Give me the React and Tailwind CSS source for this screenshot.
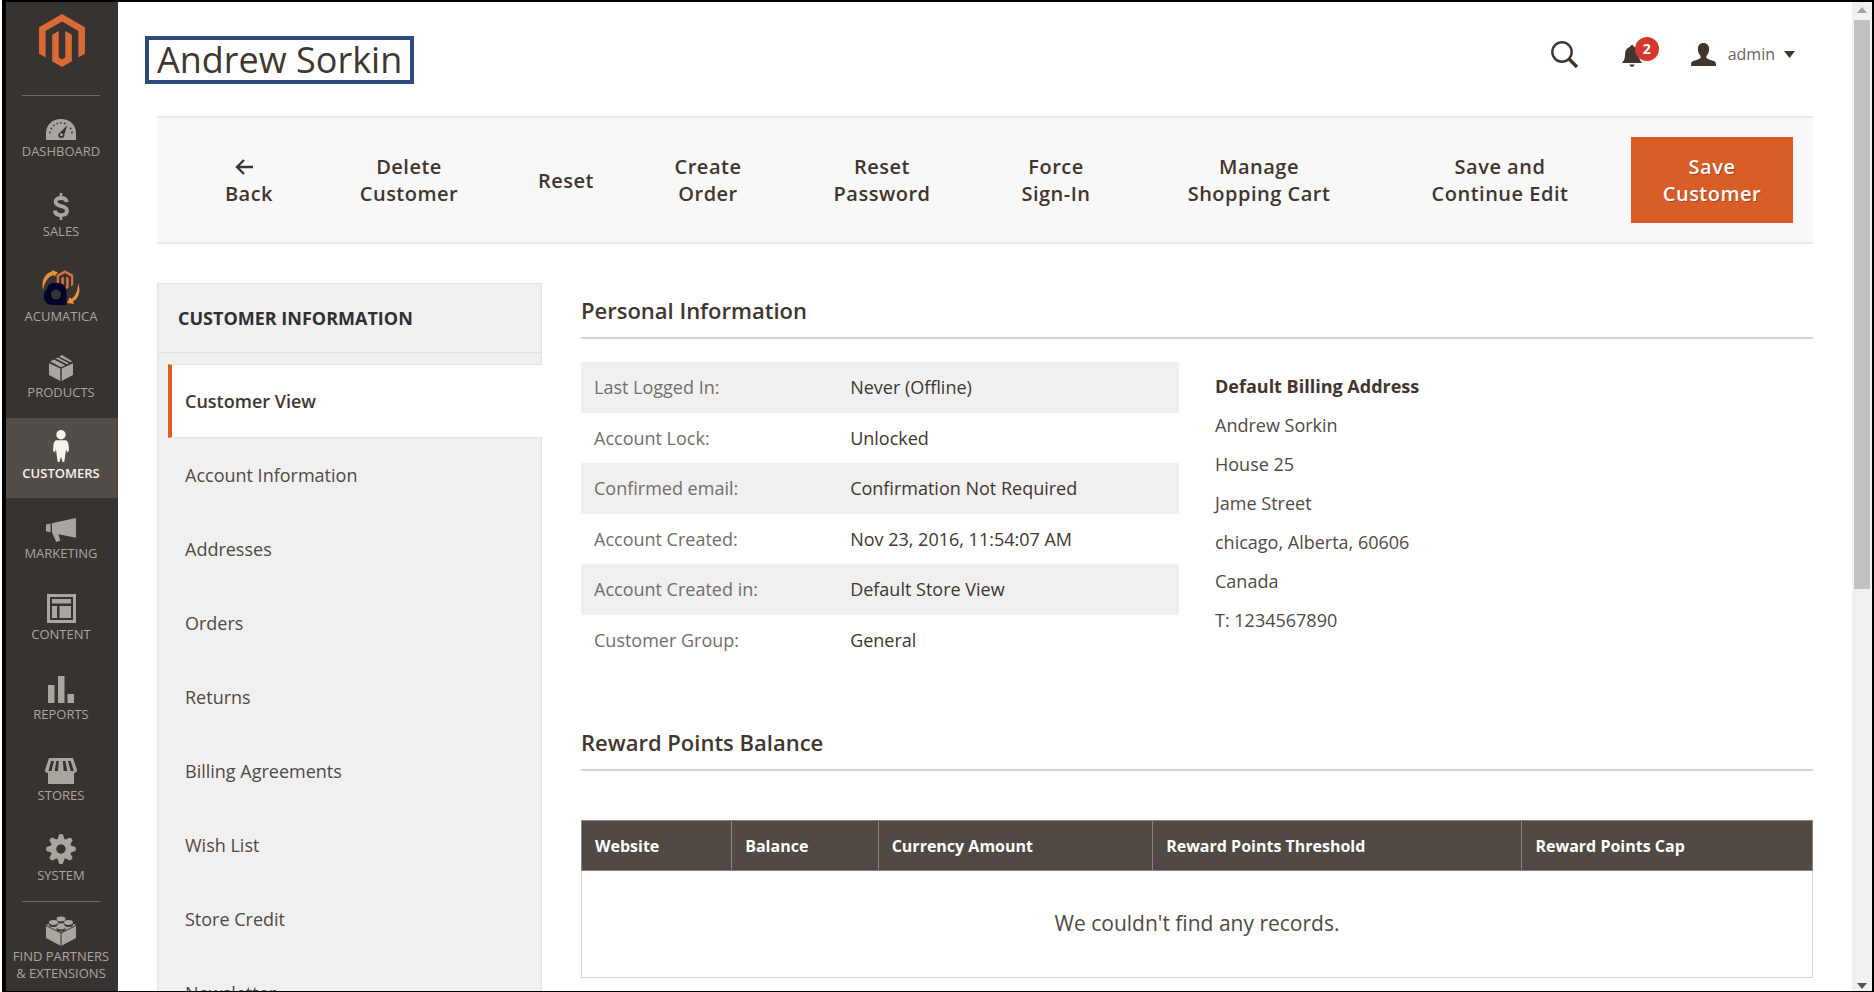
import React from "react";

const MAGENTO_PATH =
  "M12 24l-4.455-2.572v-12l2.97-1.715v12.001l1.485.902 1.485-.902V7.713l2.971 1.715v12L12 24zM22.391 6v12l-2.969 1.714V7.713L12 3.43 4.574 7.713v12.001L1.609 18V6L12 0l10.391 6z";

function Logo() {
  return (
    <svg viewBox="1.6 0 20.8 24" className="h-[53px] w-[46px] fill-[#d96a35]" aria-hidden="true">
      <path d={MAGENTO_PATH} />
    </svg>
  );
}

function DashboardIcon() {
  return (
    <svg viewBox="0 0 30 21" className="h-[21px] w-[30px]" fill="currentColor" aria-hidden="true">
      <path d="M0 21V14C0 6 6.500 0 15 0s15 6 15 14v7z" />
      <g fill="#373330">
        <circle cx="4" cy="13.500" r=".9" />
        <circle cx="5.400" cy="9.500" r=".9" />
        <circle cx="7.900" cy="6.300" r=".9" />
        <circle cx="11.300" cy="4.400" r=".9" />
        <circle cx="15" cy="3.800" r=".9" />
        <circle cx="18.700" cy="4.400" r=".9" />
        <circle cx="24.600" cy="9.500" r=".9" />
        <circle cx="26" cy="13.500" r=".9" />
        <path d="M21.400 6.200 18.300 15.600a3 3 0 1 1-4.300-2.200zM15.400 14.300a1.500 1.500 0 1 0 .1 0z" fillRule="evenodd" />
      </g>
    </svg>
  );
}

function SalesIcon() {
  return (
    <svg viewBox="0 0 16 27" className="h-[27px] w-4" fill="none" stroke="currentColor" aria-hidden="true">
      <path d="M8 0v5M8 22v5" strokeWidth="2.600" />
      <path d="M13.800 9C13.400 6.200 11.500 5 8 5 4.600 5 2.600 6.400 2.600 8.800c0 6 11.400 2.600 11.400 9 0 2.700-2.300 4.300-6 4.300-3.900 0-5.900-1.700-6.100-4.600" strokeWidth="3.800" />
    </svg>
  );
}

function AcumaticaIcon() {
  return (
    <svg viewBox="0 0 38 35" className="h-[35px] w-[38px]" aria-hidden="true">
      <path d="M1 20C-1 11 3 3 10 1.500L10 0l6 2.500L12 7V5C6 6.500 2.500 12 1 20z" fill="#e8913a" />
      <path d="M36 13c3.500 9 0 16-5 18.500l1 2.500-7-1 3-6 1.500 2C34 25.500 36 20 36 13z" fill="#e8913a" />
      <svg x="14.500" y="0" width="17" height="20" viewBox="1.6 0 20.8 24">
        <path d={MAGENTO_PATH} fill="#d97042" />
      </svg>
      <path fillRule="evenodd" fill="#03022d" d="M12 13h4c5 0 8.500 3.500 8.500 8.500V35H11C5.500 35 2 31.500 2 27v-2c0-3 1.500-4.500 3-5.500C5.500 15.500 8 13 12 13zM14 19.500a5 5 0 1 0 .1 0z" />
    </svg>
  );
}

function ProductsIcon() {
  return (
    <svg viewBox="0 0 24 26" className="h-[26px] w-6" fill="currentColor" aria-hidden="true">
      <path d="M0 8.200 11.300 13.600V26L0 20zM24 8.200 12.700 13.600V26L24 20zM1.200 6.600 5 4.500l11.200 5.700-4.200 2zM6.800 3.600 8.800 2.500 20 8.300l-2 1zM10.300 1.800 13 0l10 6.300-1.400 1z" />
    </svg>
  );
}

function CustomersIcon() {
  return (
    <svg viewBox="0 0 16 32" className="h-8 w-4" fill="currentColor" aria-hidden="true">
      <circle cx="8" cy="4.700" r="4.700" />
      <path d="M4 10.300h8c2.200 0 3.200 1.700 3.500 4l.5 6.500-2 1.700-.9-3.500L11.300 32H9.500L8 26.500 6.500 32H4.700L2.900 19 2 22.500l-2-1.700.5-6.500c.3-2.300 1.300-4 3.500-4z" />
    </svg>
  );
}

function MarketingIcon() {
  return (
    <svg viewBox="0 0 30 24" className="h-6 w-[30px]" fill="currentColor" aria-hidden="true">
      <path d="M0 6.500 4.500 5.500v8.700L0 13.300zM5.800 5.200 30 0v19.800l-17.500-3.600 1.700 6.300L10.300 24 6 14.500z" />
    </svg>
  );
}

function ContentIcon() {
  return (
    <svg viewBox="0 0 29 29" className="h-[29px] w-[29px]" fill="currentColor" aria-hidden="true">
      <path fillRule="evenodd" d="M0 0h29v29H0zM3 3v23h23V3z" />
      <path d="M5 5h19v4.500H5zM5 12h5v12H5zM12.500 12H24v12H12.500z" />
    </svg>
  );
}

function ReportsIcon() {
  return (
    <svg viewBox="0 0 26 27" className="h-[27px] w-[26px]" fill="currentColor" aria-hidden="true">
      <path d="M0 9h6.500v18H0zM10 0h6.500v27H10zM19.500 18H26v9h-6.500z" />
    </svg>
  );
}

function StoresIcon() {
  return (
    <svg viewBox="0 0 32 26" className="h-[26px] w-8" aria-hidden="true">
      <path fill="currentColor" d="M4 0h24l4 12c0 2-1.200 3-3 3v11H3V15c-1.800 0-3-1-3-3z" />
      <path fill="#373330" d="M6 3h3L6.500 13H3.500zM11.300 3h2.500L13 13H9.600zM17.800 3h2.500l2 10H18.700zM23 3h2.700l3.200 10h-3.200z" />
    </svg>
  );
}

function SystemIcon() {
  const teeth = [0, 45, 90, 135, 180, 225, 270, 315];
  return (
    <svg viewBox="0 0 30 30" className="h-[30px] w-[30px]" fill="currentColor" aria-hidden="true">
      {teeth.map((angle) => (
        <path key={angle} d="M11.300 6 13 .6Q15-.4 17 .6L18.700 6z" transform={`rotate(${angle} 15 15)`} />
      ))}
      <path fillRule="evenodd" d="M15 4.500a10.500 10.500 0 1 0 .1 0zM15 10.300a4.700 4.700 0 1 1-.1 0z" />
    </svg>
  );
}

function PartnersIcon() {
  return (
    <svg viewBox="0 0 30 30" className="h-[30px] w-[30px]" aria-hidden="true">
      <path fill="currentColor" d="M0 9 15 3l15 6v13l-15 8-15-8z" />
      <path d="M0 9.500 15 17l15-7.500M15 17v13" stroke="#373330" strokeWidth="1" fill="none" />
      {[[15, 3.5], [7.5, 7], [22.5, 7], [15, 11.5]].map(([x, y]) => (
        <g key={`${x}-${y}`}>
          <ellipse cx={x} cy={y + 1.5} rx="4.600" ry="2.500" fill="#373330" />
          <ellipse cx={x} cy={y - 0.5} rx="4.400" ry="2.400" fill="currentColor" />
        </g>
      ))}
    </svg>
  );
}

const NAV = [
  { label: "DASHBOARD", Icon: DashboardIcon },
  { label: "SALES", Icon: SalesIcon },
  { label: "ACUMATICA", Icon: AcumaticaIcon, tall: true },
  { label: "PRODUCTS", Icon: ProductsIcon },
  { label: "CUSTOMERS", Icon: CustomersIcon, active: true },
  { label: "MARKETING", Icon: MarketingIcon },
  { label: "CONTENT", Icon: ContentIcon },
  { label: "REPORTS", Icon: ReportsIcon },
  { label: "STORES", Icon: StoresIcon },
  { label: "SYSTEM", Icon: SystemIcon },
];

function Sidebar() {
  return (
    <nav aria-label="Main" className="flex w-28 shrink-0 flex-col overflow-hidden bg-[#373330] text-[13px] leading-[17px] text-[#aaa69f]">
      <a href="#home" aria-label="Magento" className="flex h-[93px] shrink-0 justify-center pt-3">
        <Logo />
      </a>
      <div className="ml-4 mr-[18px] h-px shrink-0 bg-[#736963]" />
      <ul>
        {NAV.map(({ label, Icon, active, tall }) => (
          <li key={label} className={`h-20 even:h-[81px] ${active ? "bg-[#524d49] text-[#f7f3eb]" : ""}`}>
            <a href={`#${label.toLowerCase()}`} className="flex h-full flex-col items-center pr-[2px]">
              <span className={`flex items-end justify-center ${tall ? "h-12" : "h-11"}`}>
                <Icon />
              </span>
              <span className={`mt-[3px] ${active ? "font-semibold" : ""}`}>{label}</span>
            </a>
          </li>
        ))}
      </ul>
      <div className="ml-4 mr-[18px] h-px shrink-0 bg-[#736963]" />
      <a href="#partners" className="flex flex-col items-center pr-[2px] pt-[14px] text-center">
        <PartnersIcon />
        <span className="mt-[2px] whitespace-nowrap">
          FIND PARTNERS
          <br />
          &amp; EXTENSIONS
        </span>
      </a>
    </nav>
  );
}

function PageHeader() {
  return (
    <header className="flex h-[114px] items-start justify-between pr-[18px]">
      <h1 className="-ml-3 mt-[34px] flex h-12 items-center border-4 border-[#2a4a7c] px-2 text-[36px] leading-10 text-[#41362f]">
        Andrew Sorkin
      </h1>
      <div className="mt-9 flex h-8 items-center text-[#41362f]">
        <button type="button" aria-label="Search">
          <svg viewBox="0 0 27 27" className="h-[27px] w-[27px]" fill="none" stroke="currentColor" aria-hidden="true">
            <circle cx="11" cy="11" r="9.700" strokeWidth="2.400" />
            <path d="M17.800 17.800 26 26" strokeWidth="3.400" />
          </svg>
        </button>
        <button type="button" aria-label="Notifications" className="relative ml-11 mt-1 flex w-6">
          <svg viewBox="0 0 20 22" className="h-[22px] w-5" fill="currentColor" aria-hidden="true">
            <path d="M10 0c1.200 0 1.800.8 1.800 1.800 3.200.8 5 3.400 5.100 6.800.1 5 .8 6.500 3.100 9.400H0c2.300-2.900 3-4.400 3.100-9.400.1-3.400 1.900-6 5.100-6.800C8.200.8 8.800 0 10 0zM7.500 19.500h5c-.4 1.600-1.200 2.300-2.500 2.300s-2.100-.7-2.500-2.300z" />
          </svg>
          <span className="absolute -top-2 left-[13px] flex h-6 w-6 items-center justify-center rounded-full bg-[#d3382f] text-sm font-bold text-white">
            2
          </span>
        </button>
        <button type="button" className="ml-[45px] flex items-center text-[16px] text-[#6b645e]">
          <svg viewBox="0 0 25 23" className="h-[23px] w-[25px] text-[#41362f]" fill="currentColor" aria-hidden="true">
            <path d="M12.500 0c3.600 0 5.600 2.300 5.600 5.800 0 3-1 5.600-2.700 7.200v2c1.600 1.700 6.200 2.200 8.400 3.600 1 .7 1.200 2 1.200 4.400H0c0-2.400.2-3.700 1.200-4.400 2.200-1.400 6.800-1.900 8.400-3.600v-2C7.900 11.400 6.900 8.800 6.900 5.800 6.900 2.300 8.900 0 12.500 0z" />
          </svg>
          <span className="ml-3">admin</span>
          <svg viewBox="0 0 11 7" className="ml-[9px] h-[7px] w-[11px] text-[#41362f]" fill="currentColor" aria-hidden="true">
            <path d="M0 0h11L5.500 7z" />
          </svg>
        </button>
      </div>
    </header>
  );
}

const ACTIONS = [
  ["Delete", "Customer"],
  ["Reset"],
  ["Create", "Order"],
  ["Reset", "Password"],
  ["Force", "Sign-In"],
  ["Manage", "Shopping Cart"],
  ["Save and", "Continue Edit"],
];

function ActionBar() {
  return (
    <div className="grid h-32 grid-cols-[128fr_192fr_122fr_162fr_186fr_162fr_244fr_238fr_auto] items-center border-y-2 border-[#ebebeb] bg-[#f8f8f8] pl-7 pr-5 text-xl font-semibold leading-[27px] tracking-wide text-[#41362f]">
      <button type="button" className="flex flex-col items-center">
        <span className="flex h-[27px] items-center pr-[10px]">
          <svg viewBox="0 0 18 16" className="h-4 w-[18px]" fill="none" stroke="currentColor" strokeWidth="2.400" aria-hidden="true">
            <path d="M9 1 2 8l7 7M2 8h16" />
          </svg>
        </span>
        Back
      </button>
      {ACTIONS.map((lines) => (
        <button key={lines.join(" ")} type="button" className="whitespace-nowrap text-center">
          {lines.map((line) => (
            <span key={line} className="block">{line}</span>
          ))}
        </button>
      ))}
      <button type="button" className="ml-3 h-[86px] w-[162px] bg-[#d95d27] text-white text-shadow-[1px_1px_0_rgba(0,0,0,0.25)]">
        Save
        <br />
        Customer
      </button>
    </div>
  );
}

const TABS = ["Customer View", "Account Information", "Addresses", "Orders", "Returns", "Billing Agreements", "Wish List", "Store Credit", "Newsletter"];

function CustomerTabs() {
  return (
    <aside className="w-[385px] shrink-0 border border-[#e3e3e3] bg-[#f0f0f0]">
      <h2 className="flex h-[69px] items-center border-b border-[#e3e3e3] pl-5 text-[18px] font-bold text-[#303030]">
        CUSTOMER INFORMATION
      </h2>
      <ul className="pt-[11px] text-[18px] text-[#514943]">
        {TABS.map((tab, i) => (
          <li key={tab} className="h-[74px] pl-[10px]">
            <a
              href={`#${tab.toLowerCase().replace(/ /g, "-")}`}
              className={`flex h-full items-center ${
                i === 0 ? "-mr-px border-y border-l-4 border-y-[#e3e3e3] border-l-[#e05e23] bg-white pl-[13px] font-semibold text-[#41362f]" : "pl-[17px]"
              }`}
            >
              {tab}
            </a>
          </li>
        ))}
      </ul>
    </aside>
  );
}

const INFO = [
  ["Last Logged In:", "Never (Offline)"],
  ["Account Lock:", "Unlocked"],
  ["Confirmed email:", "Confirmation Not Required"],
  ["Account Created:", "Nov 23, 2016, 11:54:07 AM"],
  ["Account Created in:", "Default Store View"],
  ["Customer Group:", "General"],
];

const ADDRESS = ["Andrew Sorkin", "House 25", "Jame Street", "chicago, Alberta, 60606", "Canada", "T: 1234567890"];

function SectionTitle({ children }) {
  return (
    <h2 className="flex h-14 items-center border-b-2 border-[#d9d5c9] text-[22px] font-semibold text-[#41362f]">{children}</h2>
  );
}

const COLUMNS = [
  { label: "Website", width: "w-[12.2%]" },
  { label: "Balance", width: "w-[11.9%]" },
  { label: "Currency Amount", width: "w-[22.3%]" },
  { label: "Reward Points Threshold", width: "w-[30%]" },
  { label: "Reward Points Cap", width: "" },
];

function CustomerDetails() {
  return (
    <div className="min-w-0 flex-1">
      <section>
        <SectionTitle>Personal Information</SectionTitle>
        <div className="mt-[23px] grid grid-cols-2 gap-x-9 text-[18px]">
          <table className="w-full self-start text-left">
            <tbody>
              {INFO.map(([label, value]) => (
                <tr key={label} className="h-[51px] odd:bg-[#f0f0f0] even:h-[50px]">
                  <th scope="row" className="w-[43%] pl-[13px] font-normal text-[#736d68]">{label}</th>
                  <td className="pl-3 text-[#41362f]">{value}</td>
                </tr>
              ))}
            </tbody>
          </table>
          <address className="mt-[5px] leading-[39px] text-[#514943] not-italic">
            <strong className="block font-bold text-[#41362f]">Default Billing Address</strong>
            {ADDRESS.map((line) => (
              <span key={line} className="block">{line}</span>
            ))}
          </address>
        </div>
      </section>
      <section className="mt-[50px]">
        <SectionTitle>Reward Points Balance</SectionTitle>
        <table className="mt-[49px] w-full table-fixed border-collapse text-left">
          <thead>
            <tr className="h-[50px] bg-[#514943] text-[16px] text-white">
              {COLUMNS.map(({ label, width }) => (
                <th key={label} scope="col" className={`border border-[#8a837f] pl-[13px] font-bold ${width}`}>{label}</th>
              ))}
            </tr>
          </thead>
          <tbody>
            <tr className="h-[107px]">
              <td colSpan={5} className="border border-[#d6d6d6] text-center text-[21px] text-[#514943]">
                We couldn't find any records.
              </td>
            </tr>
          </tbody>
        </table>
      </section>
    </div>
  );
}

function ScrollRail() {
  return (
    <div className="flex w-5 shrink-0 flex-col items-center bg-[#f1f1f1]" aria-hidden="true">
      <svg viewBox="0 0 10 6" className="mt-[5px] h-[6px] w-[10px]" fill="#a3a3a3">
        <path d="M0 6h10L5 0z" />
      </svg>
      <div className="mt-[7px] h-[57.5%] w-4 bg-[#c1c1c1]" />
      <svg viewBox="0 0 10 6" className="mb-[2px] mt-auto h-[6px] w-[10px]" fill="#505050">
        <path d="M0 0h10L5 6z" />
      </svg>
    </div>
  );
}

export default function App() {
  return (
    <div className="h-screen bg-white pl-[2px] font-['Open_Sans','Noto_Sans',sans-serif] text-[#41362f]">
      <div className="flex h-full overflow-hidden border-b border-l-4 border-r-2 border-t-2 border-black">
        <Sidebar />
        <main className="min-w-0 flex-1 overflow-hidden pl-[39px] pr-[39px]">
          <PageHeader />
          <ActionBar />
          <div className="mt-[39px] flex gap-[39px]">
            <CustomerTabs />
            <CustomerDetails />
          </div>
        </main>
        <ScrollRail />
      </div>
    </div>
  );
}
